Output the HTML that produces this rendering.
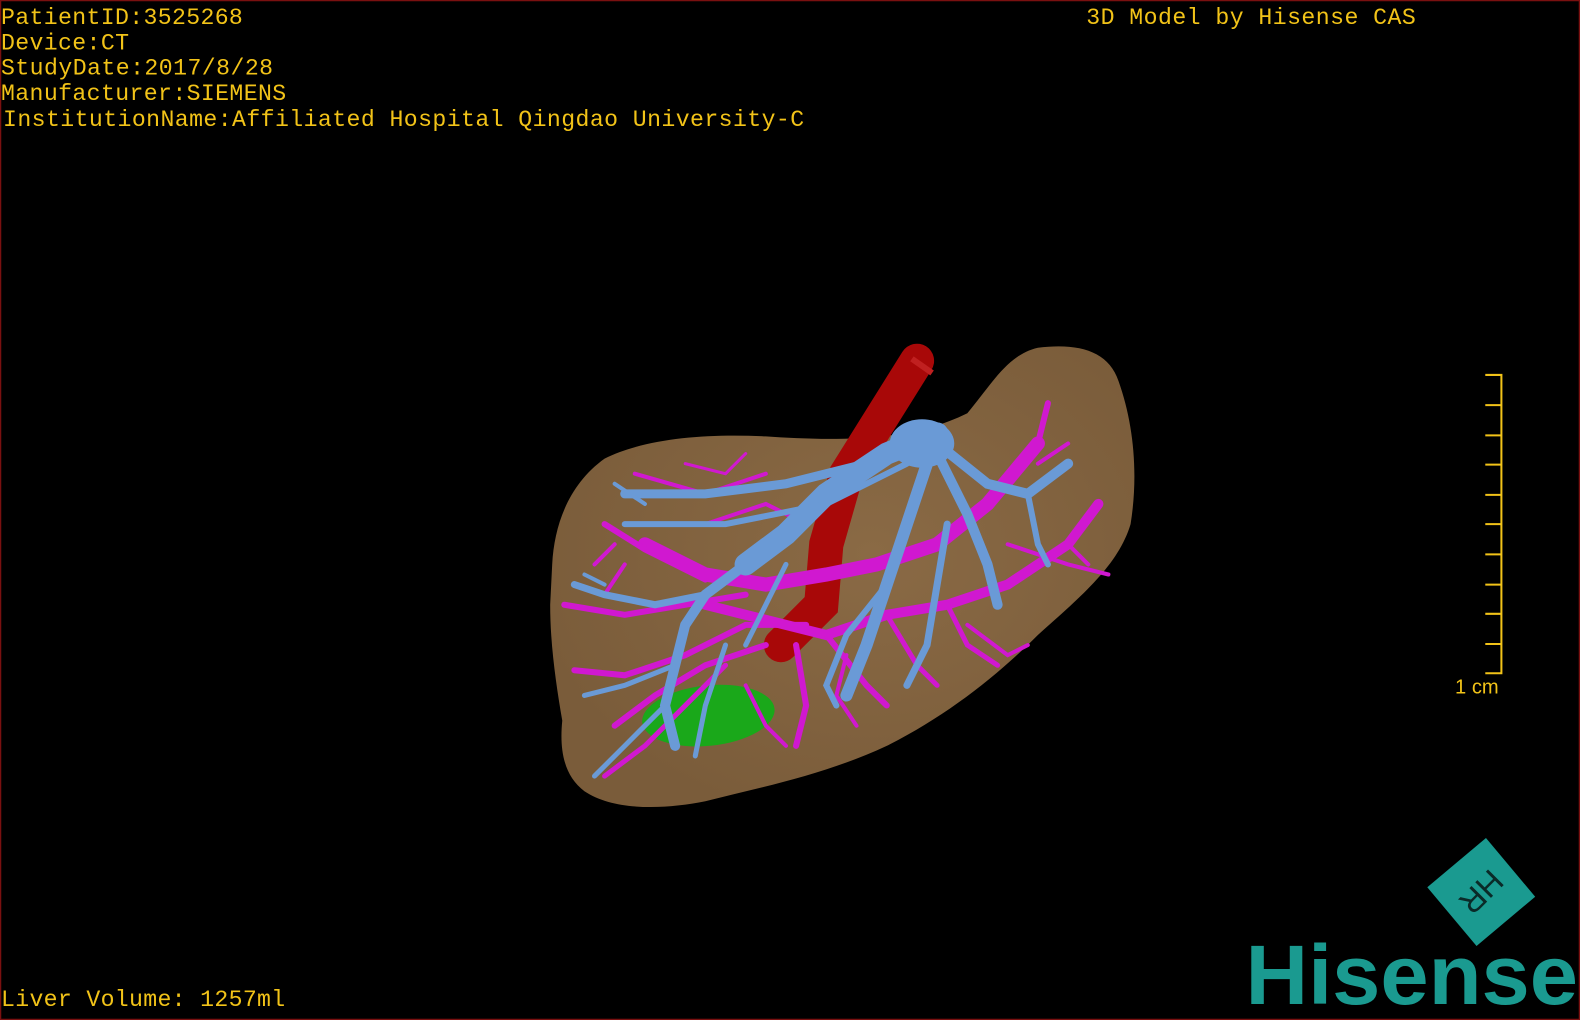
<!DOCTYPE html>
<html><head><meta charset="utf-8"><style>
html,body{margin:0;padding:0;background:#000;width:1580px;height:1020px;overflow:hidden}
svg{display:block}
text{font-family:"Liberation Mono",monospace;fill:#f2c318}
</style></head><body>
<svg width="1580" height="1020" viewBox="0 0 1568 1012" preserveAspectRatio="none">
<rect x="0.5" y="0.5" width="1567" height="1011" fill="#000" stroke="#7a1010" stroke-width="1.5"/>
<g font-size="23">
<text x="1" y="24" textLength="240">PatientID:3525268</text>
<text x="1" y="49" textLength="127">Device:CT</text>
<text x="1" y="74" textLength="270">StudyDate:2017/8/28</text>
<text x="1" y="99" textLength="283">Manufacturer:SIEMENS</text>
<text x="3" y="125" textLength="795">InstitutionName:Affiliated Hospital Qingdao University-C</text>
<text x="1078" y="24" textLength="327">3D Model by Hisense CAS</text>
<text x="1" y="998" textLength="282">Liver Volume: 1257ml</text>
</g>
<defs><radialGradient id="lg" cx="0.55" cy="0.45" r="0.6"><stop offset="0" stop-color="#8a6a45"/><stop offset="1" stop-color="#7a5c3a"/></radialGradient></defs>
<path d="M548,560 C550,520 565,480 600,455 C640,435 700,430 760,433 C820,437 900,440 960,410 C985,380 1000,352 1030,345 C1070,340 1100,348 1110,378 C1125,420 1130,470 1122,520 C1110,560 1075,590 1030,630 C990,670 940,710 880,740 C820,768 760,780 700,795 C660,803 610,805 580,785 C560,770 555,745 558,715 C552,680 546,640 546,600 Z" fill="url(#lg)"/>
<path d="M910,358 L840,470 L820,540 L815,600 L775,640" stroke="#a80808" stroke-width="34" fill="none" stroke-linecap="round"/>
<path d="M905,356 L925,370" stroke="#c02020" stroke-width="6"/>
<ellipse cx="703" cy="710" rx="66" ry="30" fill="#1aa81a" transform="rotate(-6 703 710)"/>
<g stroke="#d018d0" fill="none" stroke-linecap="round">
<path d="M640,540 L700,570 L760,580 L820,570 L870,560 L930,540 L980,500 L1030,440" stroke-width="14"/>
<path d="M1030,440 L1040,400" stroke-width="6"/>
<path d="M700,600 L760,615 L820,630 L880,610 L940,600 L1000,580 L1060,540 L1090,500" stroke-width="10"/>
<path d="M600,520 L640,545 L700,575" stroke-width="6"/>
<path d="M560,600 L620,610 L680,600 L740,590" stroke-width="6"/>
<path d="M570,665 L620,670 L680,650 L740,620 L800,620" stroke-width="6"/>
<path d="M610,720 L650,690 L700,660 L760,640" stroke-width="6"/>
<path d="M600,770 L640,740 L680,700 L720,660" stroke-width="5"/>
<path d="M790,640 L800,700 L790,740" stroke-width="6"/>
<path d="M820,630 L860,680 L880,700" stroke-width="6"/>
<path d="M880,610 L910,660 L930,680" stroke-width="5"/>
<path d="M940,600 L960,640 L990,660" stroke-width="5"/>
<path d="M630,470 L700,490 L760,470" stroke-width="4"/>
<path d="M700,520 L760,500 L800,520" stroke-width="4"/>
<path d="M740,680 L760,720 L780,740" stroke-width="4"/>
<path d="M1000,540 L1060,560 L1100,570" stroke-width="4"/>
<path d="M610,540 L590,560 M620,560 L600,590" stroke-width="4"/>
<path d="M1030,460 L1060,440 M1060,540 L1080,560" stroke-width="4"/>
<path d="M680,460 L720,470 L740,450" stroke-width="3"/>
<path d="M840,650 L830,690 L850,720" stroke-width="4"/>
<path d="M960,620 L1000,650 L1020,640" stroke-width="4"/>
</g>
<g stroke="#6a9ad6" fill="none" stroke-linecap="round">
<path d="M930,430 L880,450 L820,490 L780,530 L740,560" stroke-width="22"/>
<path d="M930,430 L860,460 L780,480 L700,490 L620,490" stroke-width="9"/>
<path d="M900,460 L820,500 L720,520 L620,520" stroke-width="6"/>
<path d="M740,560 L700,590 L680,620 L670,660 L660,700 L670,740" stroke-width="10"/>
<path d="M700,590 L650,600 L600,590 L570,580" stroke-width="7"/>
<path d="M670,660 L620,680 L580,690" stroke-width="5"/>
<path d="M660,700 L620,740 L590,770" stroke-width="5"/>
<path d="M920,460 L900,520 L880,580 L860,640 L840,690" stroke-width="12"/>
<path d="M930,450 L960,510 L980,560 L990,600" stroke-width="10"/>
<path d="M930,440 L980,480 L1020,490 L1060,460" stroke-width="10"/>
<path d="M1020,490 L1030,540 L1040,560" stroke-width="6"/>
<path d="M880,580 L840,630 L820,680 L830,700" stroke-width="6"/>
<path d="M940,520 L930,580 L920,640 L900,680" stroke-width="7"/>
<path d="M720,640 L700,700 L690,750" stroke-width="5"/>
<path d="M640,500 L610,480 M600,580 L580,570" stroke-width="4"/>
<path d="M780,560 L760,600 L740,640" stroke-width="5"/>
</g>
<ellipse cx="915" cy="440" rx="32" ry="24" fill="#6a9ad6"/>
<g stroke="#f2c318" stroke-width="2" fill="none">
<path d="M1474,372 H1490 V668 H1474"/>
<path d="M1474,402H1490M1474,432H1490M1474,461H1490M1474,491H1490M1474,520H1490M1474,550H1490M1474,580H1490M1474,609H1490M1474,639H1490"/>
</g>
<text x="1444" y="688" font-size="20" style="font-family:'Liberation Sans',sans-serif">1 cm</text>
<g transform="translate(1470,885) rotate(-40)">
<rect x="-38" y="-38" width="76" height="76" fill="#1a9a90"/>
<text x="0" y="11" font-size="32" text-anchor="middle" transform="rotate(175)" style="fill:#0a2a28;font-family:'Liberation Sans',sans-serif">HR</text>
</g>
<text x="1236" y="996" font-size="84" font-weight="bold" textLength="330" lengthAdjust="spacingAndGlyphs" style="fill:#1a9a90;font-family:'Liberation Sans',sans-serif">Hisense</text>
</svg>
</body></html>
